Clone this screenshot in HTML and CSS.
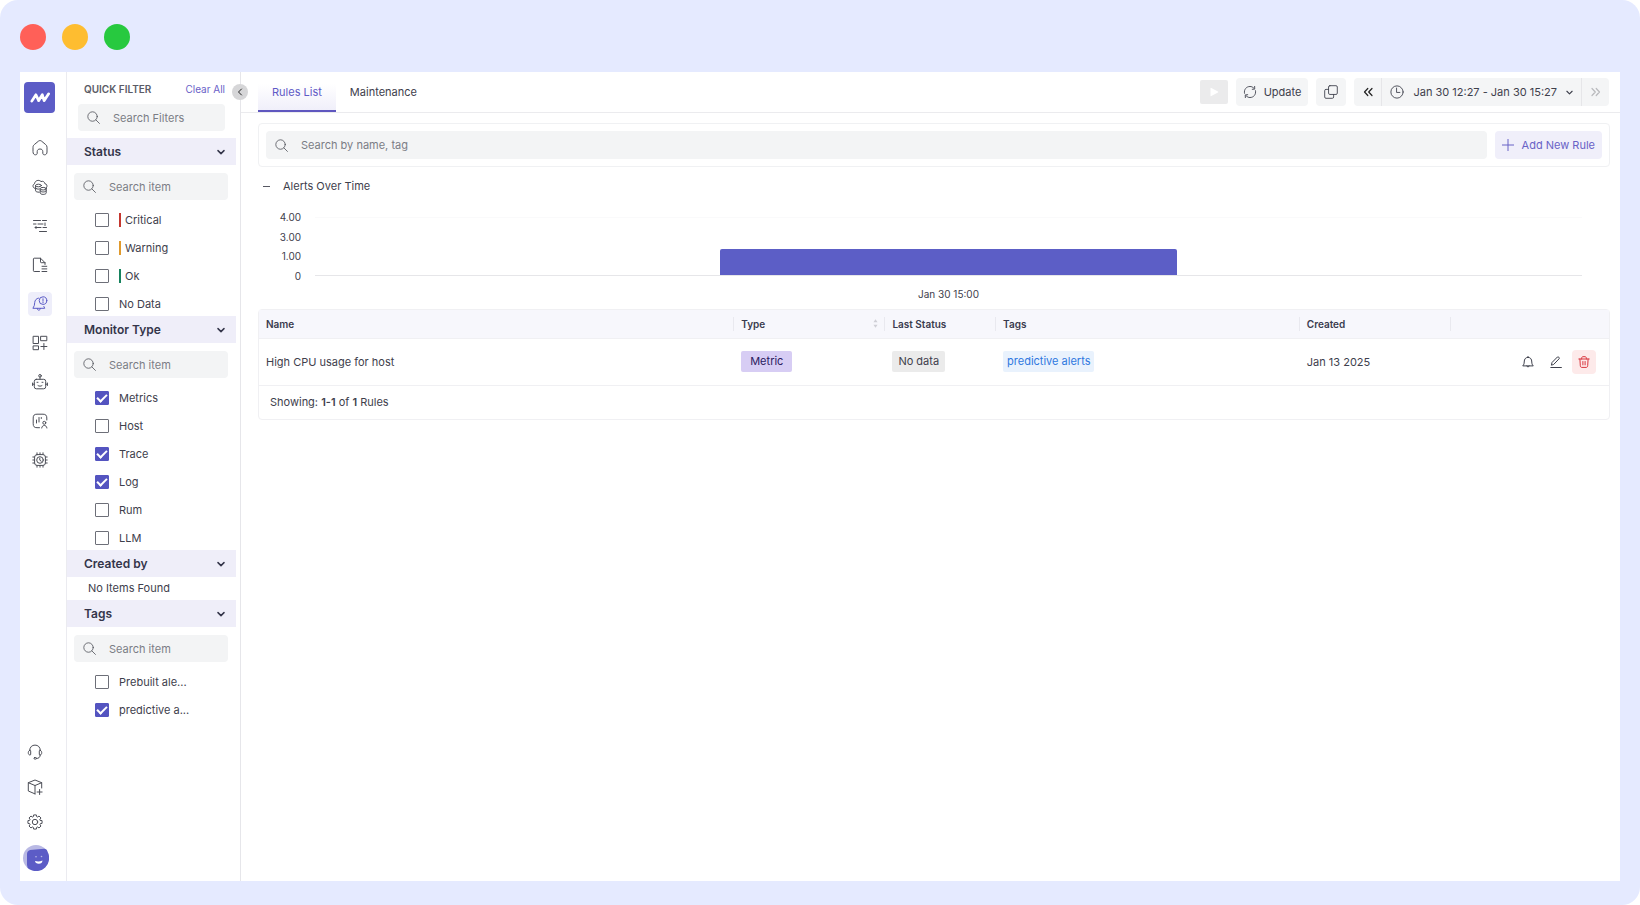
FILE: index.html
```html
<!DOCTYPE html>
<html lang="en">
<head>
<meta charset="utf-8">
<title>Rules List</title>
<link rel="stylesheet" href="styles.css">
</head>
<body>
<svg class="defs" aria-hidden="true">
  <symbol id="search" viewBox="0 0 16 16"><circle cx="6.8" cy="6.8" r="5.8"/><path d="M11 11 15.300 15.300"/></symbol>
  <symbol id="chev" viewBox="0 0 8 8"><path d="M1 2.600 4 5.600 7 2.600"/></symbol>
</svg>
<div class="frame">
  <header class="lights"><span class="light red"></span><span class="light amber"></span><span class="light green"></span></header>
  <div class="app">
    <nav class="rail" aria-label="Main">
      <a href="#" class="logo" aria-label="Home page"><svg viewBox="0 0 22 12"><path d="M2 10 6.500 3l3 6.500L13.500 3l2 6.500 5-7.500"/></svg></a>
      <div class="rail-top">
        <a href="#" class="nav" aria-label="Home"><svg viewBox="0 0 16 16"><path d="M1 7.200C1 6 1.500 5.300 2.300 4.600L6.500 1.100c.9-.7 2.100-.7 3 0l4.200 3.500C14.500 5.300 15 6 15 7.200V12c0 1.700-.9 2.800-2.500 2.800-1.200 0-1.700-.7-1.700-1.800v-1.300c0-1.700-1-2.700-2.800-2.700s-2.800 1-2.800 2.700V13c0 1.100-.5 1.800-1.700 1.800C1.900 14.800 1 13.700 1 12z"/></svg></a>
        <a href="#" class="nav" aria-label="Infrastructure"><svg viewBox="0 0 16 16"><path d="M3 9.500C.6 9 .2 5.800 2.500 4.800 2.800 1.500 7 .2 9 2.600c1.700-.9 3.600.1 3.800 2 2.200.3 2.800 2.600 1.700 4"/><ellipse cx="6.500" cy="6.500" rx="2.900" ry="1.300"/><path d="M3.600 6.500v5.300c0 .8 1.500 1.400 3.600 1.400M3.600 9c.5.9 2 1.300 3.600 1.100"/><ellipse cx="11.200" cy="9.700" rx="3" ry="1.300"/><path d="M8.200 9.700v4.200c0 2 6 2 6 0V9.700M8.200 11.800c.5 1.700 5.500 1.700 6 0"/></svg></a>
        <a href="#" class="nav" aria-label="Traces"><svg viewBox="0 0 16 16"><path d="M1.500 2.500h7M10.500 2.500h4M1.500 6h2.500M6 6h5M13 5v2.500M3 9.500h6M11 9.500h3.500M7.500 13.500h7M4 8.500v2"/></svg></a>
        <a href="#" class="nav" aria-label="Logs"><svg viewBox="0 0 16 16"><path d="M7.500 14.500H2.200c-.5 0-.8-.3-.8-.8V2c0-.5.3-.8.8-.8h6.300L13 5.700v1.800M8.500 1.200v3.700c0 .5.3.8.8.8H13M10 9.300h4.800M10 11.900h4.800M10 14.500h4.800"/></svg></a>
        <a href="#" class="nav active" aria-label="Alerts" aria-current="page"><svg viewBox="0 0 16 16"><path d="M6.500 2.100C4.300 2.500 2.800 4.200 2.700 6.700L2.300 9.500.9 12.300h11.800l-.8-1.800M5.200 12.500c.2 2.400 3 2.400 3.200 0"/><circle cx="11" cy="4.600" r="3.800"/><path d="M11 2.800v2.200M11 6.100v.6"/></svg></a>
        <a href="#" class="nav" aria-label="Dashboards"><svg viewBox="0 0 16 16"><path d="M1.500 1.300h5v7.200h-5zM9 1.300h5.800v4.400H9zM1.500 10.900h5v3.800h-5zM11.900 8.500v6M8.900 11.500h6"/></svg></a>
        <a href="#" class="nav" aria-label="Assistant"><svg viewBox="0 0 16 16"><circle cx="8" cy="1.800" r="1.300"/><path d="M8 3.100v2.200M.6 9v2.500M15.400 9v2.500M.6 10.200h1.700M13.700 10.200h1.700M5 8.300h1M10 8.300h1M6 11.600c1.200.8 2.800.8 4 0"/><rect x="2.300" y="5.300" width="11.400" height="9.500" rx="2"/></svg></a>
        <a href="#" class="nav" aria-label="User monitoring"><svg viewBox="0 0 16 16"><path d="M7.500 14.700H5c-2.700 0-3.800-1.200-3.800-3.900V5C1.200 2.300 2.300 1.200 5 1.200h6c2.700 0 3.800 1.200 3.800 3.800v2M4.500 7v3M7 4.500V9M9.300 4.500v1"/><circle cx="12.300" cy="9.800" r="1.500"/><path d="M9.700 15c.2-3.500 5-3.500 5.200 0"/></svg></a>
        <a href="#" class="nav" aria-label="Synthetics"><svg viewBox="0 0 16 16"><rect x="2.600" y="2.600" width="10.800" height="10.800" rx="2.500"/><circle cx="8" cy="8" r="3.300"/><path d="M7.800 6.200v2l1.400 1M5 2.600V.8M8 2.600V.8M11 2.600V.8M5 15.200v-1.800M8 15.200v-1.800M11 15.200v-1.800M.8 5h1.800M.8 8h1.800M.8 11h1.800M13.400 5h1.800M13.400 8h1.800M13.400 11h1.800"/></svg></a>
      </div>
      <div class="rail-bottom">
        <a href="#" class="nav" aria-label="Support"><svg viewBox="0 0 16 16"><path d="M2.700 6.500C2.700 3 5 1.100 8 1.100S13.300 3 13.300 6.500M2.700 6.300C.8 6.800.7 10.500 2.700 11c.7.200 1-.2 1-.8V7.100c0-.6-.4-1-1-.8zM13.300 6.300c1.900.5 2 4.200 0 4.700-.7.200-1-.2-1-.8V7.100c0-.6.400-1 1-.8zM13.200 11c0 2.300-1.500 3.500-3.700 3.500"/><rect x="7" y="13.600" width="2.500" height="1.500" rx=".7"/></svg></a>
        <a href="#" class="nav" aria-label="Integrations"><svg viewBox="0 0 16 16"><path d="M8 14.900 1.300 12V3.700L8 1l6.700 2.700V9M1.300 3.700 8 6.500l6.700-2.800M8 6.500v8.400M12.600 10.500v5M10.100 13h5"/></svg></a>
        <a href="#" class="nav" aria-label="Settings"><svg viewBox="0 0 16 16"><circle cx="8" cy="8" r="2.700"/><path d="M13.360 6.360 15.070 6.630 15.070 9.370 13.360 9.640 12.950 10.630 13.970 12.030 12.030 13.970 10.630 12.950 9.640 13.360 9.370 15.070 6.630 15.070 6.360 13.360 5.370 12.950 3.970 13.970 2.030 12.030 3.050 10.630 2.640 9.640.930 9.370.930 6.630 2.640 6.360 3.050 5.370 2.030 3.970 3.970 2.030 5.370 3.050 6.360 2.640 6.630.930 9.370.930 9.640 2.640 10.630 3.050 12.030 2.030 13.970 3.970 12.950 5.370z"/></svg></a>
        <button class="avatar" aria-label="Account"><svg viewBox="0 0 26 26"><circle cx="13" cy="13" r="13" fill="#b9b9e4"/><path d="M4 9q0-3 3-4l14-1.200q3 0 3.500 3A13 13 0 0 1 6.500 24.300Q4 23 4 20z" fill="#5c5cc6"/><path d="M12 16q4 1 7.500-.5-.3 3.200-3.700 3.200T12 16z" fill="#fff"/><circle cx="13" cy="11.800" r=".8" fill="#b9b9e4"/><circle cx="18.500" cy="11.500" r=".8" fill="#b9b9e4"/></svg></button>
      </div>
    </nav>

    <aside class="filters">
      <button class="collapse" aria-label="Collapse filters"><svg viewBox="0 0 8 8"><path d="M5.500 1 2.500 4l3 3"/></svg></button>
      <div class="filters-head"><h2>QUICK FILTER</h2><button class="clear">Clear All</button></div>
      <label class="field wide"><svg><use href="#search"/></svg><input type="text" placeholder="Search Filters" aria-label="Search Filters"></label>

      <button class="section-head">Status<svg><use href="#chev"/></svg></button>
      <div class="section">
        <label class="field"><svg><use href="#search"/></svg><input type="text" placeholder="Search item" aria-label="Search status"></label>
        <label class="item"><input type="checkbox"><span class="level critical">Critical</span></label>
        <label class="item"><input type="checkbox"><span class="level warning">Warning</span></label>
        <label class="item"><input type="checkbox"><span class="level ok">Ok</span></label>
        <label class="item"><input type="checkbox"><span>No Data</span></label>
      </div>

      <button class="section-head">Monitor Type<svg><use href="#chev"/></svg></button>
      <div class="section">
        <label class="field"><svg><use href="#search"/></svg><input type="text" placeholder="Search item" aria-label="Search monitor type"></label>
        <label class="item"><input type="checkbox" checked><span>Metrics</span></label>
        <label class="item"><input type="checkbox"><span>Host</span></label>
        <label class="item"><input type="checkbox" checked><span>Trace</span></label>
        <label class="item"><input type="checkbox" checked><span>Log</span></label>
        <label class="item"><input type="checkbox"><span>Rum</span></label>
        <label class="item"><input type="checkbox"><span>LLM</span></label>
      </div>

      <button class="section-head">Created by<svg><use href="#chev"/></svg></button>
      <p class="empty">No Items Found</p>

      <button class="section-head">Tags<svg><use href="#chev"/></svg></button>
      <div class="section">
        <label class="field"><svg><use href="#search"/></svg><input type="text" placeholder="Search item" aria-label="Search tags"></label>
        <label class="item"><input type="checkbox"><span>Prebuilt ale...</span></label>
        <label class="item"><input type="checkbox" checked><span>predictive a...</span></label>
      </div>
    </aside>

    <main class="main">
      <div class="topbar">
        <div class="tabs"><a href="#" class="tab current">Rules List</a><a href="#" class="tab">Maintenance</a></div>
        <div class="tools">
          <button class="play" disabled aria-label="Play"><svg viewBox="0 0 10 10"><path d="M1.500 1.300v7.400q0 .8.800.4L9 5.500q.6-.5 0-1L2.300.9q-.8-.4-.8.4z"/></svg></button>
          <button class="tool"><svg viewBox="0 0 16 16"><path d="M1.700 9.500C.8 5 4 1.700 8 1.700c1.800 0 3 .6 4.200 1.800M14.300 6.500C15.200 11 12 14.300 8 14.300c-1.800 0-3-.6-4.200-1.800M13.300 1.600l.1 3.100-2.800.2M2.700 14.400l-.1-3.100 2.800-.2"/></svg>Update</button>
          <button class="tool" aria-label="Copy"><svg viewBox="0 0 16 16"><rect x="5.200" y=".8" width="10" height="10" rx="1.500"/><path d="M5.200 5H2.300C1.300 5 .8 5.500.8 6.500v7.200c0 1 .5 1.500 1.500 1.500h7.200c1 0 1.500-.5 1.500-1.500v-2.900"/></svg></button>
          <div class="range">
            <button class="step back" aria-label="Earlier"><svg viewBox="0 0 10 10"><path d="M4.800 1.500 1.500 5l3.300 3.500M9 1.500 5.700 5 9 8.500"/></svg></button>
            <button class="dates"><svg class="clock" viewBox="0 0 16 16"><circle cx="8" cy="8" r="7"/><path d="M7.500 3.500v5h3.800"/></svg>Jan 30 12:27 - Jan 30 15:27<svg class="chev"><use href="#chev"/></svg></button>
            <button class="step" disabled aria-label="Later"><svg viewBox="0 0 10 10"><path d="M1 1.500 4.300 5 1 8.500M5.200 1.500 8.500 5 5.200 8.500"/></svg></button>
          </div>
        </div>
      </div>

      <div class="content">
        <div class="search-card">
          <label class="field"><svg><use href="#search"/></svg><input type="text" placeholder="Search by name, tag" aria-label="Search rules"></label>
          <button class="add"><svg viewBox="0 0 12 12"><path d="M6 0v12M0 6h12"/></svg>Add New Rule</button>
        </div>

        <section class="alerts">
          <h3><button class="fold" aria-label="Hide chart"><svg viewBox="0 0 8 8"><path d="M0 4h8"/></svg></button>Alerts Over Time</h3>
          <div class="chart">
            <div class="y-axis"><span>4.00</span><span>3.00</span><span>1.00</span><span>0</span></div>
            <div class="plot"><div class="bar"></div></div>
            <div class="x-axis">Jan 30 15:00</div>
          </div>
        </section>

        <div class="table-card">
          <table>
            <colgroup><col class="c-name"><col class="c-type"><col class="c-status"><col class="c-tags"><col class="c-created"><col></colgroup>
            <thead><tr>
              <th>Name</th>
              <th><div class="sortable">Type<svg viewBox="0 0 6 10"><path d="M3 0 5.500 3.500H.5zM3 10 .5 6.500h5z"/></svg></div></th>
              <th>Last Status</th><th>Tags</th><th>Created</th><th aria-label="Actions"></th>
            </tr></thead>
            <tbody><tr>
              <td>High CPU usage for host</td>
              <td><span class="tag metric">Metric</span></td>
              <td><span class="tag nodata">No data</span></td>
              <td><span class="tag label">predictive alerts</span></td>
              <td>Jan 13 2025</td>
              <td><div class="actions">
                <button aria-label="Mute"><svg viewBox="0 0 12 12"><path d="M1 9.600c.8-.9 1.200-1.800 1.200-3.600 0-3 1.500-4.600 3.800-4.600S9.800 3 9.800 6c0 1.800.4 2.700 1.200 3.600zM6 1.400V.4M4.800 9.900c.2 1.500 2.200 1.500 2.400 0"/></svg></button>
                <button aria-label="Edit"><svg viewBox="0 0 12 12"><path d="M1.500 8.800 2 6.500 7.400 1c.8-.7 2.500.8 1.800 1.700L3.900 8.200zM.8 11.500h10.600"/></svg></button>
                <button class="delete" aria-label="Delete"><svg viewBox="0 0 12 12"><path d="M.8 3h10.400M3.600 3c0-1.600.4-2.300 1.200-2.300h2.400c.8 0 1.200.7 1.200 2.300M1.900 3l.4 6.700c.1 1.200.6 1.700 1.700 1.700h4c1.100 0 1.600-.5 1.700-1.700l.4-6.700M4.900 5.500v3.400M7.100 5.500v3.400"/></svg></button>
              </div></td>
            </tr></tbody>
          </table>
          <p class="showing">Showing: <b>1-1</b> of <b>1</b> Rules</p>
        </div>
      </div>
    </main>
  </div>
</div>
</body>
</html>
```
FILE: styles.css
```css
* { box-sizing: border-box; }

body {
  margin: 0;
  background: #fff;
  color: #3e404c;
  font: 11px/16px Inter, "Liberation Sans", sans-serif;
}

h2, h3, p { margin: 0; }
a { color: inherit; text-decoration: none; }

button {
  border: 0;
  padding: 0;
  background: none;
  color: inherit;
  font: inherit;
}

svg {
  display: block;
  flex: none;
  fill: none;
  stroke: currentColor;
  stroke-linecap: round;
  stroke-linejoin: round;
}

.defs { position: absolute; width: 0; height: 0; }

.frame {
  display: flex;
  flex-direction: column;
  min-height: 100vh;
  padding: 0 20px 24px;
  border-radius: 18px;
  background: #e5eaff;
}

.lights { display: flex; gap: 16px; padding: 24px 0 22px; }
.light { width: 26px; height: 26px; border-radius: 50%; }
.red { background: #ff6058; }
.amber { background: #febd30; }
.green { background: #27c93f; }

.app { flex: 1; display: flex; background: #fff; }

/* Icon rail */
.rail {
  display: flex;
  flex-direction: column;
  width: 47px;
  padding: 10px 0;
  border-right: 1px solid #ebebf0;
}
.logo {
  display: grid;
  place-items: center;
  width: 31px;
  height: 31px;
  margin-left: 4px;
  border-radius: 4px;
  background: #5c5cc6;
  color: #fff;
}
.logo svg { width: 20px; height: 11px; stroke-width: 3; }
.rail-top { display: flex; flex-direction: column; gap: 15px; padding: 23px 0 0 8px; }
.nav {
  display: grid;
  place-items: center;
  width: 24px;
  height: 24px;
  border-radius: 4px;
  color: #4c4e57;
}
.nav svg { width: 16px; height: 16px; }
.nav.active { background: #eeeefa; color: #5c5cc6; }
.rail-bottom { display: flex; flex-direction: column; gap: 11px; margin-top: auto; padding-left: 3px; }
.avatar svg { width: 26px; height: 26px; stroke: none; }

/* Filter panel */
.filters {
  position: relative;
  width: 174px;
  padding: 8px 4px 0 0;
  border-right: 1px solid #e6e6ea;
}
.collapse {
  position: absolute;
  top: 12px;
  right: -8px;
  display: grid;
  place-items: center;
  width: 16px;
  height: 16px;
  border-radius: 50%;
  background: #d6d6d8;
  color: #222;
}
.collapse svg { width: 8px; height: 8px; }
.filters-head {
  display: flex;
  align-items: center;
  justify-content: space-between;
  height: 17px;
  padding: 0 11px 0 17px;
}
h2 { font-size: 10px; font-weight: 600; color: #5b5c66; }
.clear { font-size: 10px; color: #6a5fc8; }

.field {
  display: flex;
  align-items: center;
  gap: 13px;
  height: 27px;
  padding: 0 9px;
  border-radius: 4px;
  background: #f3f4f5;
  color: #50525a;
}
.field svg { width: 13px; height: 13px; }
.field input {
  flex: 1;
  min-width: 0;
  padding: 0;
  border: 0;
  outline: 0;
  background: none;
  font: inherit;
}
.field input::placeholder { color: #7b7d85; opacity: 1; }
.filters .wide { margin: 7px 11px 7px; }

.section-head {
  display: flex;
  align-items: center;
  justify-content: space-between;
  width: 100%;
  height: 27px;
  padding: 0 11px 0 17px;
  background: #efeef9;
  color: #34354a;
  font-size: 12px;
  font-weight: 600;
}
.section-head svg { width: 8px; height: 8px; stroke-width: 1.5; }

.section { display: flex; flex-direction: column; gap: 4px; padding-top: 8px; }
.section .field { margin: 0 8px 4px 7px; }
.item { display: flex; align-items: center; gap: 10px; height: 24px; padding-left: 28px; }
.item input {
  appearance: none;
  display: grid;
  place-items: center;
  width: 14px;
  height: 14px;
  margin: 0;
  border: 1px solid #6d6f78;
  border-radius: 1px;
}
.item input:checked { border-color: #5454c0; background: #5454c0; }
.item input:checked::before {
  content: "";
  width: 8px;
  height: 4px;
  margin-bottom: 2px;
  border: solid #fff;
  border-width: 0 0 2px 2px;
  rotate: -45deg;
}
.level { padding-left: 4px; border-left: 2px solid; line-height: 14px; }
.critical { border-color: #c4372f; }
.warning { border-color: #e09a2d; }
.ok { border-color: #16825d; }
.empty { padding-left: 21px; line-height: 23px; }

/* Main area */
.main { flex: 1; min-width: 0; }
.topbar {
  display: flex;
  justify-content: space-between;
  height: 41px;
  padding: 0 11px 0 17px;
  border-bottom: 1px solid #ebebee;
}
.tabs { display: flex; padding-top: 12px; }
.tab { padding: 0 14px; }
.tab.current {
  border-bottom: 2px solid #5f57bf;
  background: linear-gradient(#fff, #f0effa);
  color: #5f5ac6;
}
.tools { display: flex; align-items: center; gap: 8px; }
.play {
  display: grid;
  place-items: center;
  width: 28px;
  height: 24px;
  border-radius: 2px;
  background: #ebebec;
}
.play svg { width: 10px; height: 10px; fill: #fff; stroke: none; }
.tool {
  display: flex;
  align-items: center;
  gap: 7px;
  height: 28px;
  padding: 0 7px;
  border-radius: 4px;
  background: #f4f5f6;
}
.tool svg { width: 14px; height: 14px; }
.tool:nth-child(3) { padding: 0 8px; }
.range { display: flex; height: 28px; border-radius: 4px; background: #f4f5f6; }
.step { display: grid; place-items: center; width: 27px; color: #222; }
.step svg { width: 10px; height: 10px; stroke-width: 1.2; }
.step:disabled { color: #b9babd; }
.dates { display: flex; align-items: center; padding: 0 8px; border: solid #e6e6e9; border-width: 0 1px; }
.clock { width: 14px; height: 14px; margin-right: 9px; }
.chev { width: 7px; height: 7px; margin-left: 9px; stroke-width: 1.3; }

.content { padding: 10px 10px 0 17px; }
.search-card {
  display: flex;
  gap: 8px;
  padding: 7px;
  border: 1px solid #f0f1f3;
  border-radius: 4px;
}
.search-card .field { flex: 1; height: 28px; }
.add {
  display: flex;
  align-items: center;
  gap: 8px;
  padding: 0 7px;
  border-radius: 4px;
  background: #f0effa;
  color: #6962c6;
}
.add svg { width: 12px; height: 12px; }

.alerts { padding-top: 11px; }
h3 { display: flex; align-items: center; gap: 9px; font-size: 11px; font-weight: 400; }
.fold { display: grid; place-items: center; width: 16px; height: 16px; border-radius: 4px; }
.fold svg { width: 7px; height: 7px; }
.chart {
  display: grid;
  grid-template: 67px 33px / 43px 1fr;
  column-gap: 14px;
  padding: 15px 28px 0 0;
  font-size: 10px;
}
.y-axis {
  grid-row: 1 / 3;
  display: flex;
  flex-direction: column;
  justify-content: space-between;
  height: 75px;
  text-align: right;
}
.plot {
  display: flex;
  align-items: flex-end;
  justify-content: center;
  margin-top: 8px;
  border-bottom: 1px solid #e6e6e9;
  border-top: 1px solid #fafafb;
}
.bar { width: 36%; height: 26px; border-radius: 2px 2px 0 0; background: #5c5ec6; }
.x-axis { grid-column: 2; padding-top: 10px; text-align: center; }

/* Rules table */
.table-card { border: 1px solid #f0f0f3; border-radius: 4px; }
table { width: 100%; border-collapse: collapse; table-layout: fixed; }
.c-name { width: 35.2%; }
.c-type { width: 11.2%; }
.c-status { width: 8.2%; }
.c-tags { width: 22.5%; }
.c-created { width: 11.2%; }
th {
  height: 28px;
  padding: 0 7px;
  background: linear-gradient(#e9e9ef, #e9e9ef) right center / 1px 14px no-repeat #f7f7fc;
  color: #3a3b4e;
  font-size: 10px;
  font-weight: 600;
  text-align: left;
}
th:last-child { background: #f7f7fc; }
td { height: 47px; padding: 0 7px; border: solid #f0f0f3; border-width: 1px 0; }
.sortable { display: flex; align-items: center; justify-content: space-between; }
.sortable svg { width: 5px; height: 9px; fill: #cfcfd6; stroke: none; }
.tag { display: inline-block; border-radius: 2px; line-height: 21px; }
.metric { padding: 0 9px; background: #d7cdf4; color: #2b1a5e; }
.nodata { padding: 0 6px; background: #ebebeb; }
.label { padding: 0 4px; background: #e9f2fd; color: #2f78e0; }
.actions { display: flex; justify-content: flex-end; gap: 4px; padding-right: 6px; }
.actions button { display: grid; place-items: center; width: 24px; height: 24px; border-radius: 4px; }
.actions svg { width: 12px; height: 12px; }
.actions .delete { background: #fdeaea; color: #d9363e; }
.showing { padding: 8px 11px 9px; }
.showing b { font-weight: 600; }
```
